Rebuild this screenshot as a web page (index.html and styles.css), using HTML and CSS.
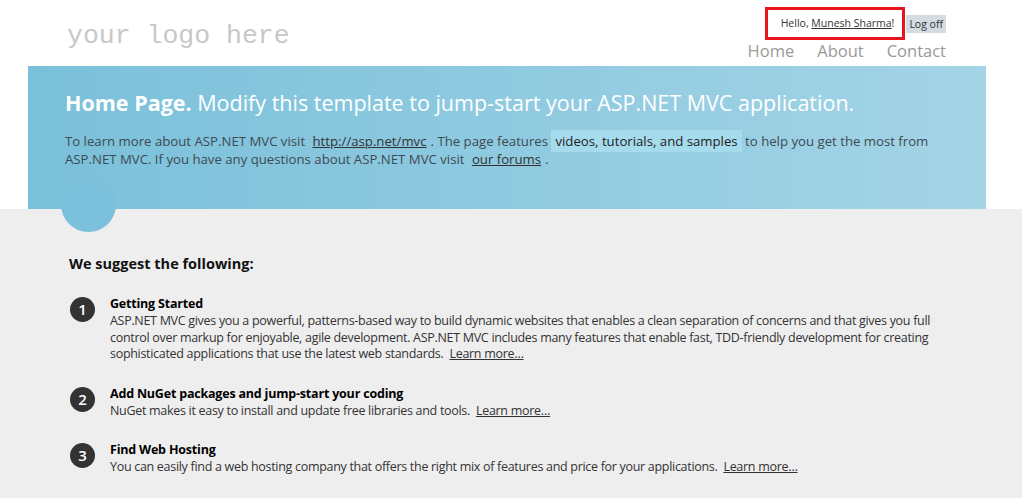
FILE: index.html
```html
<!DOCTYPE html>
<html lang="en">
<head>
    <meta charset="UTF-8">
    <meta name="viewport" content="width=device-width, initial-scale=1.0">
    <title>Home Page - My ASP.NET MVC Application</title>
    <link rel="stylesheet" href="styles.css">
</head>
<body>
    <header>
        <div class="header-wrapper">
            <p class="site-title"><a href="#">your logo here</a></p>
            <div class="header-right">
                <section id="login">
                    <span class="hello">Hello, <a href="#" class="username">Munesh Sharma</a>!</span>
                    <a href="#" class="logoff">Log off</a>
                </section>
                <nav>
                    <a href="#">Home</a>
                    <a href="#">About</a>
                    <a href="#">Contact</a>
                </nav>
            </div>
        </div>
    </header>

    <section class="featured">
        <h1><strong>Home Page.</strong> Modify this template to jump-start your ASP.NET MVC application.</h1>
        <p>
            To learn more about ASP.NET MVC visit
            <a href="#">http://asp.net/mvc</a>.
            The page features <mark>videos, tutorials, and samples</mark> to help you get the most from ASP.NET MVC.
            If you have any questions about ASP.NET MVC visit
            <a href="#">our forums</a>.
        </p>
    </section>

    <section class="main-content">
        <div class="accent"></div>
        <h3>We suggest the following:</h3>
        <ol class="round">
            <li class="one">
                <h5>Getting Started</h5>
                ASP.NET MVC gives you a powerful, patterns-based way to build dynamic websites that
                enables a clean separation of concerns and that gives you full control over markup
                for enjoyable, agile development. ASP.NET MVC includes many features that enable
                fast, TDD-friendly development for creating sophisticated applications that use
                the latest web standards.
                <a href="#">Learn more…</a>
            </li>
            <li class="two">
                <h5>Add NuGet packages and jump-start your coding</h5>
                NuGet makes it easy to install and update free libraries and tools.
                <a href="#">Learn more…</a>
            </li>
            <li class="three">
                <h5>Find Web Hosting</h5>
                You can easily find a web hosting company that offers the right mix of features
                and price for your applications.
                <a href="#">Learn more…</a>
            </li>
        </ol>
    </section>
</body>
</html>
```

FILE: styles.css
```css
html {
    background-color: #fff;
}

body {
    margin: 0;
    padding: 0;
    font-family: "Open Sans", sans-serif;
    font-size: 12.5px;
    color: #333;
}

a {
    color: #333;
}

/* header */
header {
    height: 66px;
}

.header-wrapper {
    display: flex;
    justify-content: space-between;
    margin-left: 28px;
    width: 918px;
}

.site-title {
    margin: 0;
    padding: 18px 0 0 39px;
    font-family: "Liberation Mono", monospace;
    font-size: 26.5px;
    line-height: 36px;
}

.site-title a {
    color: #c8c8c8;
    text-decoration: none;
}

.header-right {
    display: flex;
    flex-direction: column;
    align-items: flex-end;
}

#login {
    display: flex;
    align-items: center;
    margin-top: 7px;
    font-size: 10.5px;
}

.hello {
    display: inline-block;
    width: 126px;
    height: 27px;
    padding-right: 8px;
    line-height: 27px;
    border: 3px solid #e8151e;
    text-align: right;
}

.username {
    color: #333;
}

.logoff {
    margin-left: 1px;
    padding: 0 3px;
    line-height: 18px;
    background-color: #d3dce0;
    text-decoration: none;
}

nav {
    display: flex;
    gap: 23px;
    margin-top: 1px;
}

nav a {
    color: #999;
    text-decoration: none;
    font-size: 16.5px;
    line-height: 20px;
}

/* featured */
.featured {
    margin-left: 28px;
    width: 958px;
    height: 143px;
    box-sizing: border-box;
    padding: 24px 20px 0 37px;
    background: linear-gradient(to right, #7ac0da 0%, #a4d4e6 100%);
}

.featured h1 {
    margin: 0;
    color: #fff;
    font-size: 21.5px;
    font-weight: normal;
    line-height: 26px;
}

.featured h1 strong {
    font-weight: bold;
}

.featured p {
    margin: 16px 0 0;
    font-size: 13.2px;
    line-height: 18px;
    color: #3d4a52;
}

.featured a {
    padding: 0 4px;
}

mark {
    background-color: #a6dbed;
    color: #222;
    padding: 2px 4px;
}

/* main content */
.main-content {
    position: relative;
    background-color: #efeeef;
    width: 1022px;
    height: 289px;
    padding: 43px 0 0 69px;
    box-sizing: border-box;
}

.accent {
    position: absolute;
    left: 61px;
    top: -32px;
    width: 55px;
    height: 55px;
    border-radius: 50%;
    background-color: #7cc1db;
}

.main-content h3 {
    margin: 0;
    font-size: 14.5px;
    font-weight: bold;
    color: #111;
    line-height: 24px;
}

ol.round {
    list-style: none;
    margin: 19px 0 0;
    padding: 0;
}

ol.round li {
    position: relative;
    padding: 0 60px 0 41px;
    margin-bottom: 22px;
    line-height: 16.5px;
    letter-spacing: -0.3px;
}

ol.round li::before {
    position: absolute;
    left: 1px;
    top: 2px;
    width: 25px;
    height: 25px;
    border-radius: 50%;
    background-color: #333;
    color: #fff;
    font-size: 15px;
    font-weight: 600;
    line-height: 25px;
    text-align: center;
    letter-spacing: 0;
}

ol.round li.one::before { content: "1"; }
ol.round li.two::before { content: "2"; }
ol.round li.three::before { content: "3"; }

ol.round h5 {
    margin: 0;
    font-size: 12.5px;
    font-weight: bold;
    color: #000;
    line-height: 18px;
    letter-spacing: -0.2px;
}

ol.round a {
    margin-left: 3px;
}
```
